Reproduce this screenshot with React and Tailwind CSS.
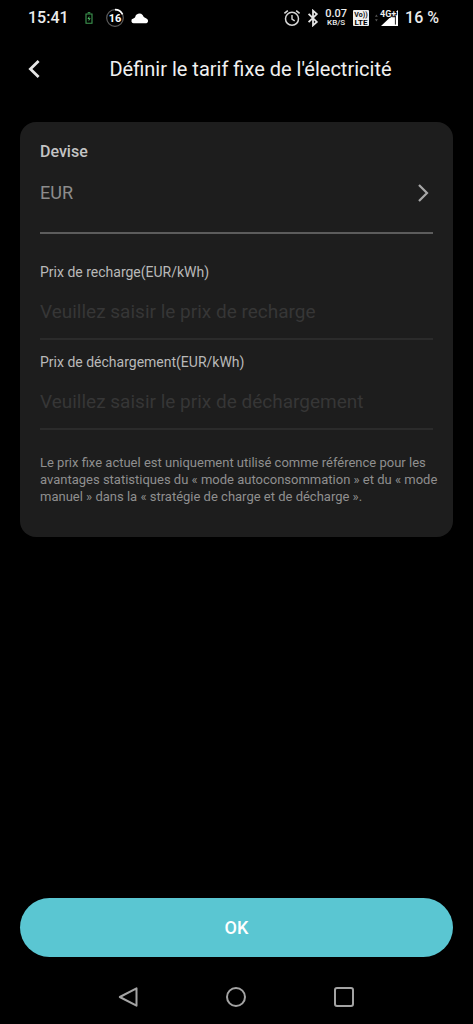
import { useState } from 'react';

function BatteryIcon() {
    return (
        <svg viewBox="0 0 8 12" className="h-3 w-2" fill="none" aria-hidden="true">
            <path d="M1 2h6v9.3H1z" stroke="#3f9a52" strokeWidth="1.1" />
            <path d="M2.7 0.7h2.6" stroke="#3f9a52" strokeWidth="1.2" />
            <path d="M4.4 3.8L2.4 7h1.4l-.3 2.4L5.7 6.2H4.2z" fill="#4cbb62" />
        </svg>
    );
}

// Niveau de batterie affiché dans un anneau
function RingLevel({ value }) {
    return (
        <svg viewBox="0 0 20 20" className="h-5 w-5" fill="none" aria-hidden="true">
            <circle cx="10" cy="10" r="8.3" stroke="#5c5c5c" strokeWidth="1.2" />
            <path d="M10 1.6A8.4 8.4 0 0 1 17.6 6.4" stroke="#fff" strokeWidth="1.6" />
            <text x="10" y="14" textAnchor="middle" fontSize="11" fontWeight="700" fill="#fff">
                {value}
            </text>
        </svg>
    );
}

function CloudIcon() {
    return (
        <svg viewBox="0 0 18 12" className="h-3 w-[18px]" fill="#fff" aria-hidden="true">
            <path d="M3 11.2A2.3 2.3 0 0 1 2.4 6.6L4 5.4A4.4 4.4 0 0 1 11.6 3l1.2 2 3 1.8A2.4 2.4 0 0 1 15.4 11.2z" />
        </svg>
    );
}

function AlarmIcon() {
    return (
        <svg viewBox="0 0 18 18" className="h-[18px] w-[18px]" fill="none" stroke="#d8d8d8" aria-hidden="true">
            <circle cx="9" cy="9.8" r="6.5" strokeWidth="1.5" />
            <path d="M9 6v4.2l2.7 1.7" strokeWidth="1.4" />
            <path d="M1.4 4.4l3.4-2.8M16.6 4.4l-3.4-2.8" strokeWidth="1.6" />
        </svg>
    );
}

function BluetoothIcon() {
    return (
        <svg viewBox="0 0 12 18" className="h-[18px] w-3" fill="none" stroke="#e4e4e4" strokeWidth="1.8" aria-hidden="true">
            <path d="M1.6 4.9l8.2 8-3.8 3.4V1.7l3.8 3.4-8.2 8" />
        </svg>
    );
}

function VolteIcon() {
    return (
        <svg viewBox="0 0 16 16" className="h-4 w-4" aria-hidden="true">
            <rect width="16" height="16" rx="1" fill="#efefef" />
            <text x="8" y="7.2" textAnchor="middle" fontSize="7" fontWeight="700" fill="#111">
                Vo))
            </text>
            <text x="8" y="14.6" textAnchor="middle" fontSize="8" fontWeight="700" fill="#000">
                LTE
            </text>
        </svg>
    );
}

function SignalIcon() {
    return (
        <svg viewBox="0 0 24 18" className="h-[18px] w-6" aria-hidden="true">
            <path d="M0 7.8L1.4 5.6 2.8 7.8zM0 10.2L1.4 12.4 2.8 10.2z" fill="#555" />
            <path d="M6 17L23 1v16z" fill="#fff" />
            <path d="M20.4 7v8.6" stroke="#222" strokeWidth="1" />
            <text x="5" y="7.6" fontSize="9" fontWeight="700" fill="#eee" stroke="#000" strokeWidth="2" paintOrder="stroke">
                4G+
            </text>
        </svg>
    );
}

function StatusBar() {
    return (
        <div className="flex h-9 items-center justify-between pr-[34px] pl-7 text-base font-medium text-[#ececec]">
            <div className="flex items-center">
                <span>15:41</span>
                <span className="ml-4 flex items-center gap-3">
                    <BatteryIcon />
                    <RingLevel value={16} />
                </span>
                <span className="ml-1.5">
                    <CloudIcon />
                </span>
            </div>
            <div className="flex items-center gap-1.5">
                <AlarmIcon />
                <BluetoothIcon />
                <span className="flex flex-col text-center font-medium">
                    <span className="text-[11px] leading-[10px]">0.07</span>
                    <span className="text-[8px] leading-[8px]">KB/S</span>
                </span>
                <VolteIcon />
                <SignalIcon />
                <span>16 %</span>
            </div>
        </div>
    );
}

function PriceField({ id, label, placeholder, value, onChange }) {
    return (
        <div className="flex flex-col border-b-2 border-[#2b2b2b] pt-3 pb-3">
            <label htmlFor={id} className="text-[14px] leading-5 text-[#b9b9b9]">
                {label}
            </label>
            <input
                id={id}
                type="text"
                inputMode="decimal"
                value={value}
                onChange={(e) => onChange(e.target.value)}
                placeholder={placeholder}
                className="mt-4 h-7 w-full bg-transparent text-[19px] text-[#cccccc] outline-none placeholder:text-[#363636]"
            />
        </div>
    );
}

function NavBar() {
    return (
        <nav className="flex h-[67px] items-start justify-center gap-[84px] pt-7 pr-0.5">
            <button type="button" aria-label="Retour système">
                <svg viewBox="0 0 24 24" className="h-6 w-6" fill="none" stroke="#a3a3a3" strokeWidth="2" strokeLinejoin="round">
                    <path d="M20.5 3.3v17.4L3.8 12z" />
                </svg>
            </button>
            <button type="button" aria-label="Accueil">
                <svg viewBox="0 0 24 24" className="h-6 w-6" fill="none" stroke="#a3a3a3" strokeWidth="2">
                    <circle cx="12" cy="12" r="9" />
                </svg>
            </button>
            <button type="button" aria-label="Applications récentes">
                <svg viewBox="0 0 24 24" className="h-6 w-6" fill="none" stroke="#a3a3a3" strokeWidth="2">
                    <rect x="3" y="3" width="18" height="18" rx="2" />
                </svg>
            </button>
        </nav>
    );
}

/**
 * Écran de saisie du tarif fixe de l'électricité.
 */
export default function App() {
    const [charge, setCharge] = useState('');
    const [discharge, setDischarge] = useState('');

    return (
        <div className="flex min-h-screen flex-col bg-black font-['Roboto',sans-serif]">
            <StatusBar />

            <header className="flex h-[66px] items-center px-5">
                <button type="button" aria-label="Retour" className="flex w-7 justify-center">
                    <svg viewBox="0 0 14 20" className="h-5 w-[14px]" fill="none" stroke="#e6e6e6" strokeWidth="2.8">
                        <path d="M11.6 2L3.4 10l8.2 8" />
                    </svg>
                </button>
                <h1 className="flex-1 text-center text-xl text-[#f0f0f0]">
                    Définir le tarif fixe de l'électricité
                </h1>
            </header>

            <main className="flex flex-1 flex-col px-5 pt-5">
                <section className="rounded-2xl bg-[#1d1d1d] px-5 pt-5 pb-8">
                    <h2 id="devise" className="text-base leading-5 font-medium text-[#c4c4c4]">
                        Devise
                    </h2>
                    <button
                        type="button"
                        aria-labelledby="devise devise-value"
                        className="mb-4 flex w-full items-center justify-between border-b-2 border-[#5c5c5c] pt-[17px] pb-[25px] text-left text-lg text-[#8c8c8c]"
                    >
                        <span id="devise-value">EUR</span>
                        <svg viewBox="0 0 20 20" className="h-5 w-5" fill="none" stroke="#a8a8a8" strokeWidth="2.2" aria-hidden="true">
                            <path d="M6 2l8 8-8 8" />
                        </svg>
                    </button>

                    <PriceField
                        id="charge"
                        label="Prix de recharge(EUR/kWh)"
                        placeholder="Veuillez saisir le prix de recharge"
                        value={charge}
                        onChange={setCharge}
                    />
                    <PriceField
                        id="discharge"
                        label="Prix de déchargement(EUR/kWh)"
                        placeholder="Veuillez saisir le prix de déchargement"
                        value={discharge}
                        onChange={setDischarge}
                    />

                    <p className="mt-6 -mr-3 text-[13px] leading-[17px] text-[#8f8f8f]">
                        Le prix fixe actuel est uniquement utilisé comme référence pour les
                        avantages statistiques du « mode autoconsommation » et du « mode
                        manuel » dans la « stratégie de charge et de décharge ».
                    </p>
                </section>

                <button
                    type="button"
                    className="mt-auto h-[59px] w-full rounded-full bg-[#5ac6d2] text-lg font-medium text-white"
                >
                    OK
                </button>
            </main>

            <NavBar />
        </div>
    );
}
